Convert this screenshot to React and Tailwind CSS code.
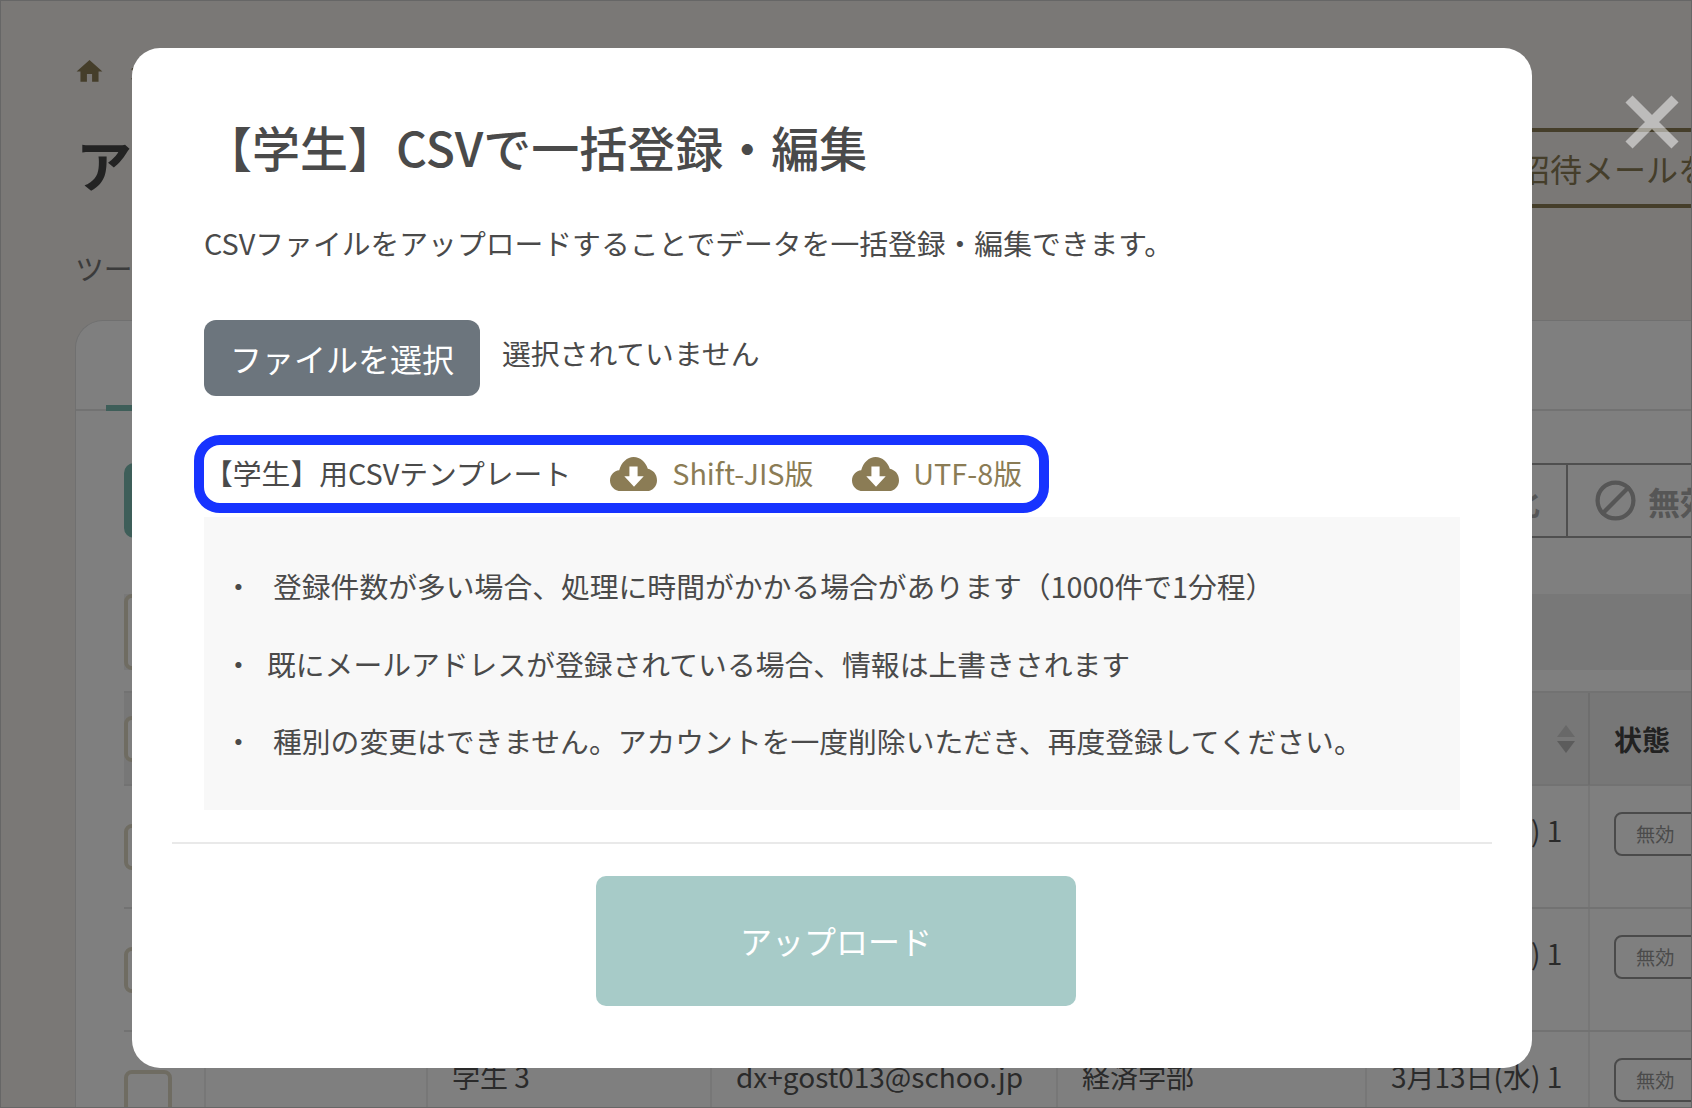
import { FaChevronRight } from 'react-icons/fa'
import { MdHome } from 'react-icons/md'
import { Ban } from 'lucide-react'

const font = 'font-["Noto_Sans_CJK_JP","Noto_Sans",sans-serif]'

const students = [
  { name: '学生 1', mail: 'dx+gost011@schoo.jp', dept: '経済学部' },
  { name: '学生 2', mail: 'dx+gost012@schoo.jp', dept: '経済学部' },
  { name: '学生 3', mail: 'dx+gost013@schoo.jp', dept: '経済学部' },
]

const notes = [
  { text: '登録件数が多い場合、処理に時間がかかる場合があります（1000件で1分程）', gap: 'ml-[20px]' },
  { text: '既にメールアドレスが登録されている場合、情報は上書きされます', gap: 'ml-[14px]' },
  { text: '種別の変更はできません。アカウントを一度削除いただき、再度登録してください。', gap: 'ml-[20px]' },
]

const cols = 'grid grid-cols-[80px_222px_284px_346px_309px_223px_200px]'

const CloudDownload = ({ className }) => (
  <svg viewBox="0 0 46 32" preserveAspectRatio="none" className={`w-[47px] h-[34px] shrink-0 ${className}`}>
    <path
      d="M11 32 C4 32 0 27 0 22 C0 17 4 13 9 12.5 C11 5 17 0 23 0 C30 0 35 5 37 11 C42 12 46 16 46 22 C46 27 42 32 36 32 Z"
      fill="#8b7c55"
    />
    <path d="M19 9 H27 V18 H33 L23.5 28 L14 18 H19 Z" fill="#fff" />
  </svg>
)

const SortArrows = () => (
  <svg viewBox="0 0 18 28" className="w-[18px] h-[28px]">
    <path d="M9 0 L18 12 H0 Z" fill="#d0d0d0" />
    <path d="M9 28 L18 16 H0 Z" fill="#b8b8b8" />
  </svg>
)

const Checkbox = () => (
  <div className="w-[48px] h-[46px] rounded-lg border-4 border-[#ded8c4] bg-white"></div>
)

const PageBehind = () => (
  <div className="flex flex-col">
    <div className="flex items-center h-[31px] mt-[56px] ml-[74px] gap-[23px] text-[#8b7c55]">
      <MdHome size={31} />
      <FaChevronRight size={14} className="mt-[5px]" />
    </div>
    <div className="flex h-[80px] mt-[41px]">
      <h1 className="shrink-0 w-[1476px] pl-[76px] text-[56px] leading-[70px] font-bold text-[#464646]">アカウント管理</h1>
      <div className="shrink-0 w-[500px] border-y-4 border-l-4 border-[#8b7c55] pl-[38px] text-[32px] leading-[72px] text-[#8b7c55]">
        招待メールを一括送信
      </div>
    </div>
    <p className="mt-[40px] h-[40px] pl-[75px] text-[28.8px] leading-[40px] text-[#777]">ツールの利用状況を確認できます</p>
    <div className="mt-[32px] ml-[75px] w-[1616px] h-[800px] rounded-tl-[28px] bg-white border-l border-t border-[#e0e0e0]">
      <div className="h-[90px] border-b-2 border-[#e4e4e4] relative">
        <div className="absolute left-[30px] -bottom-[2px] w-[200px] h-[6px] bg-[#7cbcb2]"></div>
      </div>
      <div className="pl-[48px]">
        <div className="flex mt-[52px] h-[75px]">
          <div className="shrink-0 w-[200px] rounded-[10px] bg-[#7cbcb2]"></div>
          <div className="flex shrink-0 ml-[900px] border-y-2 border-[#9e9e9e] text-[32px] font-bold text-[#acacac]">
            <div className="w-[344px] flex items-center justify-end pr-[26px] border-r-2 border-[#9e9e9e]">有効化</div>
            <div className="flex items-center gap-[11px] w-[300px] pl-[26px]">
              <Ban size={43} strokeWidth={2.4} className="shrink-0 -scale-x-100" />
              無効化
            </div>
          </div>
        </div>
        <div className="mt-[56px] h-[76px] w-[1700px] bg-[#f0f0f0]">
          <div className="w-[200px] h-[76px] rounded-lg border-4 border-[#ded8c4] bg-white"></div>
        </div>
        <div className="mt-[21px]">
          <div className={`${cols} h-[95px] bg-[#eeeeee] border-y-2 border-[#e4e4e4] font-bold text-[28px] text-[#444]`}>
            <div className="flex items-center"><Checkbox /></div>
            <div className="border-l-2 border-[#dcdcdc]"></div>
            <div className="border-l-2 border-[#dcdcdc] flex items-center pl-[24px]">氏名</div>
            <div className="border-l-2 border-[#dcdcdc] flex items-center pl-[24px]">メールアドレス</div>
            <div className="border-l-2 border-[#dcdcdc] flex items-center pl-[24px]">学部</div>
            <div className="border-l-2 border-[#dcdcdc] flex items-center justify-end pr-[13px]"><SortArrows /></div>
            <div className="border-l-2 border-[#dcdcdc] pl-[24px] leading-[92px]">状態</div>
          </div>
          {students.map((s) => (
            <div key={s.mail} className={`${cols} h-[123px] border-b-2 border-[#e4e4e4] text-[28px] leading-[40px] text-[#555]`}>
              <div className="pt-[38px]"><Checkbox /></div>
              <div className="border-l-2 border-[#eeeeee]"></div>
              <div className="border-l-2 border-[#eeeeee] pl-[24px] pt-[24px]">{s.name}</div>
              <div className="border-l-2 border-[#eeeeee] pl-[24px] pt-[24px]">{s.mail}</div>
              <div className="border-l-2 border-[#eeeeee] pl-[24px] pt-[24px]">{s.dept}</div>
              <div className="border-l-2 border-[#eeeeee] pl-[24px] pt-[24px]">3月13日(水) 1<br />0:13</div>
              <div className="border-l-2 border-[#eeeeee] pl-[24px] pt-[26px]">
                <div className="w-[100px] h-[44px] rounded-lg border-2 border-[#949494] pl-[20px] text-[19.2px] leading-[40px] text-[#969696]">無効</div>
              </div>
            </div>
          ))}
        </div>
      </div>
    </div>
  </div>
)

const UploadModal = () => (
  <div className="absolute left-[132px] top-[48px] w-[1400px] h-[1020px] rounded-[28px] bg-white pl-[72px] pt-[67px] text-[#4a4a4a]">
    <h2 className="h-[62px] text-[48px] leading-[62px] font-medium">【学生】CSVで一括登録・編集</h2>
    <p className="mt-[46px] h-[40px] text-[28.8px] leading-[40px]">CSVファイルをアップロードすることでデータを一括登録・編集できます。</p>
    <div className="flex mt-[57px]">
      <div className="w-[276px] h-[76px] rounded-xl bg-[#6c757d] text-white text-[32px] leading-[76px] pl-[26px]">ファイルを選択</div>
      <span className="ml-[22px] mt-[13px] h-[40px] text-[28.8px] leading-[40px]">選択されていません</span>
    </div>
    <div className="flex items-center mt-[39px] -ml-[10px] w-[855px] h-[78px] rounded-[26px] border-[10px] border-[#1733ff] pb-[2px] text-[28.8px]">
      <span>【学生】用CSVテンプレート</span>
      <CloudDownload className="ml-[39px] mt-[2px]" />
      <span className="ml-[15px] text-[#8b7c55]">Shift-JIS版</span>
      <CloudDownload className="ml-[39px] mt-[2px]" />
      <span className="ml-[14px] text-[#8b7c55]">UTF-8版</span>
    </div>
    <ul className="flex flex-col gap-[37.6px] mt-[4px] w-[1256px] h-[293px] bg-[#f8f8f8] pt-[49px] pl-[20px] text-[28.8px] leading-[40px]">
      {notes.map((n) => (
        <li key={n.text} className="flex">
          <span className="w-[29px] text-center">・</span>
          <span className={n.gap}>{n.text}</span>
        </li>
      ))}
    </ul>
    <div className="mt-[32px] -ml-[32px] w-[1320px] h-[2px] bg-[#e9e9e9]"></div>
    <div className="mt-[32px] ml-[392px] w-[480px] h-[130px] rounded-[10px] bg-[#a7cbc8] text-white text-[32px] leading-[128px] text-center">アップロード</div>
  </div>
)

const App = () => {
  return (
    <div className={`relative w-[1692px] h-[1108px] overflow-hidden bg-[#f4f1ed] ${font}`}>
      <PageBehind />
      <div className="absolute inset-0 bg-black/50 border border-[#666]"></div>
      <UploadModal />
      <svg viewBox="0 0 54 54" className="absolute left-[1625px] top-[95px] w-[54px] h-[54px] opacity-50">
        <path d="M4 4 L50 50 M50 4 L4 50" stroke="#fff" strokeWidth="10" />
      </svg>
    </div>
  )
}

export default App
